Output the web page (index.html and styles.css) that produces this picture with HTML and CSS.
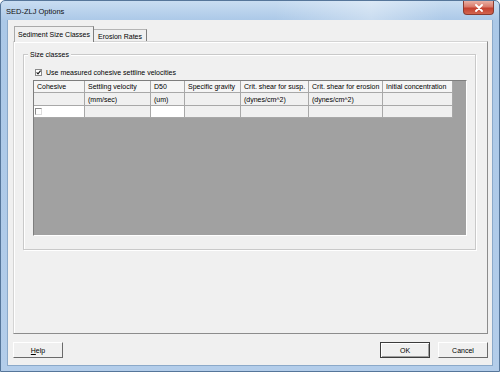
FILE: index.html
```html
<!DOCTYPE html>
<html>
<head>
<meta charset="utf-8">
<link rel="stylesheet" href="styles.css">
</head>
<body>
<div class="window">
  <div class="titlebar">
    <span class="title">SED-ZLJ Options</span>
    <div class="close">
      <svg width="10" height="8" viewBox="0 0 10 8"><path d="M2 1 L8 7 M8 1 L2 7" stroke="#fff" stroke-width="1.8" stroke-linecap="round"/></svg>
    </div>
  </div>
  <div class="client">
    <div class="tabs">
      <div class="tab tab-sel">Sediment Size Classes</div>
      <div class="tab tab-off">Erosion Rates</div>
    </div>
    <div class="panel">
      <div class="group">
        <span class="group-label">Size classes</span>
        <div class="chk-row">
          <svg class="chk" width="7" height="7" viewBox="0 0 7 7"><rect x="0.5" y="0.5" width="6" height="6" fill="#fff" stroke="#8a8a8a"/><path d="M1.6 3.4 L3 4.9 L5.6 1.7" stroke="#1a1a1a" fill="none" stroke-width="1.1"/></svg>
          <span>Use measured cohesive settline velocities</span>
        </div>
        <div class="grid">
          <div class="cells">
            <div class="cell hd">Cohesive</div>
            <div class="cell hd">Settling velocity</div>
            <div class="cell hd">D50</div>
            <div class="cell hd">Specific gravity</div>
            <div class="cell hd">Crit. shear for susp.</div>
            <div class="cell hd">Crit. shear for erosion</div>
            <div class="cell hd">Initial concentration</div>

            <div class="cell un"></div>
            <div class="cell un">(mm/sec)</div>
            <div class="cell un">(um)</div>
            <div class="cell un"></div>
            <div class="cell un">(dynes/cm^2)</div>
            <div class="cell un">(dynes/cm^2)</div>
            <div class="cell un"></div>

            <div class="cell dt white"><span class="box"></span></div>
            <div class="cell dt"></div>
            <div class="cell dt white"></div>
            <div class="cell dt"></div>
            <div class="cell dt"></div>
            <div class="cell dt"></div>
            <div class="cell dt"></div>
          </div>
        </div>
      </div>
    </div>
    <div class="buttons">
      <div class="btn"><span><u>H</u>elp</span></div>
      <div class="spacer"></div>
      <div class="btn btn-default">OK</div>
      <div class="btn">Cancel</div>
    </div>
  </div>
</div>
</body>
</html>
```

FILE: styles.css
```css
* { box-sizing: border-box; }
html, body { margin: 0; padding: 0; }
body {
  width: 500px;
  height: 372px;
  overflow: hidden;
  font-family: "Liberation Sans", Arial, sans-serif;
  font-size: 7px;
  color: #000;
  background: #fff;
}
.window {
  width: 500px;
  height: 372px;
  background: linear-gradient(to bottom, #c9ddf1 0, #abc8e7 20px, #b3cdea 100%);
  border: 1px solid #56769a;
  border-radius: 5px 5px 0 0;
  display: flex;
  flex-direction: column;
  padding: 0 6px 5px 6px;
}
.titlebar {
  height: 19px;
  display: flex;
  align-items: center;
  background: linear-gradient(90deg, rgba(255,255,255,0) 0, rgba(255,255,255,0) 55%, rgba(255,255,255,0.35) 75%, rgba(255,255,255,0) 90%);
}
.title {
  font-size: 7.5px;
  margin-left: -1px;
  margin-top: 1px;
  color: #111;
}
.close {
  margin-left: auto;
  margin-right: -1px;
  align-self: flex-start;
  width: 31px;
  height: 14px;
  border: 1px solid #8a3b30;
  border-top: none;
  border-radius: 0 0 4px 4px;
  background: linear-gradient(to bottom, #e9b0a4 0, #d9796a 45%, #c4402f 55%, #d2654f 100%);
  display: flex;
  align-items: center;
  justify-content: center;
}
.close svg { display: block; }
.client {
  flex: 1;
  background: #f0f0f0;
  border: 1px solid #8ba9c9;
  border-top: none;
  padding: 7px 4px 6px 5px;
  display: flex;
  flex-direction: column;
}
.tabs {
  display: flex;
  align-items: flex-end;
  height: 15px;
  margin-bottom: -1px;
  padding-left: 1px;
  position: relative;
  z-index: 1;
}
.tab {
  display: flex;
  align-items: center;
  justify-content: center;
  white-space: nowrap;
  background: #f0f0f0;
}
.tab-sel {
  width: 80px;
  height: 16px;
  border: 1px solid #a9a9a9;
  border-right-color: #7d7d7d;
  border-bottom: none;
  padding-bottom: 1px;
}
.tab-off {
  width: 53px;
  height: 12px;
  margin-bottom: 1px;
  border-top: 1px solid #b4b4b4;
  border-right: 1px solid #7d7d7d;
  padding-top: 1px;
}
.panel {
  height: 293px;
  border: 1px solid;
  border-color: #d4d4d4 #8c8c8c #8c8c8c #d4d4d4;
  box-shadow: inset 1px 1px #fff;
  padding: 12px 11px 0 9px;
}
.group {
  height: 196px;
  border: 1px solid #c9c9c9;
  box-shadow: inset 1px 1px #fff, 1px 1px #fff;
  padding: 0 8px 0 9px;
  display: flex;
  flex-direction: column;
}
.group-label {
  align-self: flex-start;
  margin-top: -5px;
  margin-left: -5px;
  padding: 0 2px;
  height: 9px;
  line-height: 9px;
  background: #f0f0f0;
}
.chk-row {
  margin-top: 8px;
  height: 10px;
  display: flex;
  align-items: center;
  padding-left: 2px;
}
.chk { display: block; margin-right: 4px; }
.grid {
  margin-top: 3px;
  height: 156px;
  background: #a1a1a1;
  border-top: 1px solid #7e7e7e;
  border-left: 1px solid #7e7e7e;
  border-right: 1px solid #fff;
  border-bottom: 1px solid #fff;
}
.cells {
  display: grid;
  grid-template-columns: 51px 66px 34px 56px 68px 74px 70px;
  grid-template-rows: 12px 13px 12px;
  width: max-content;
}
.cell {
  border-right: 1px solid #a8a8a8;
  border-bottom: 1px solid #a8a8a8;
  padding-left: 3px;
  display: flex;
  align-items: center;
  white-space: nowrap;
  overflow: hidden;
  background: #f0f0f0;
}
.hd { background: #f5f5f5; }
.un { background: #f0f0f0; }
.dt { background: #f0f0f0; padding-left: 1px; }
.dt.white { background: #fff; }
.box {
  display: block;
  width: 7px;
  height: 7px;
  background: #fff;
  border: 1px solid;
  border-color: #8a8a8a #dcdcdc #dcdcdc #8a8a8a;
}
.buttons {
  margin-top: 8px;
  height: 16px;
  display: flex;
  gap: 8px;
}
.spacer { flex: 1; }
.btn {
  width: 50px;
  height: 16px;
  background: #f0f0f0;
  border: 1px solid;
  border-color: #fff #6a6a6a #6a6a6a #fff;
  display: flex;
  align-items: center;
  justify-content: center;
}
.btn-default {
  border-color: #3c3c3c;
  box-shadow: inset 1px 1px #fff, inset -1px -1px #a0a0a0;
}
```
